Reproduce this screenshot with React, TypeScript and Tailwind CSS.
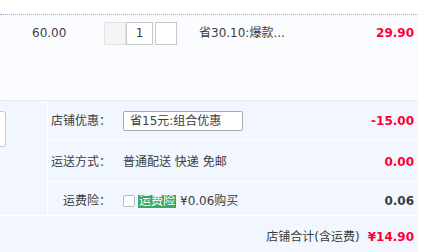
export default function App() {
  return (
    <div className="w-[430px] h-[252px] bg-white overflow-hidden font-['DejaVu_Sans','Noto_Sans_CJK_SC',sans-serif] text-[12px] text-[#3c3c3c]">
      <div className="h-[14px]" />
      <div className="w-[418px]">
        <div className="h-[87px] bg-[#fbfcff] border-t border-dotted border-t-[#80b2ff] border-b border-b-[#dddddd] flex items-start pt-[7px]">
          <div className="w-[104px] pl-[32px] leading-[23px]">60.00</div>
          <div className="flex items-center">
            <div className="w-[22px] h-[23px] bg-[#f5f5f5] border border-[#e3e3e3]" />
            <div className="w-[27px] h-[23px] bg-white border border-[#c8c8c8] text-center leading-[21px]">1</div>
            <div className="w-[22px] h-[23px] ml-[2px] bg-white border border-[#c8c8c8]" />
          </div>
          <div className="ml-[22px] leading-[22px]">省30.10:爆款...</div>
          <div className="ml-auto pr-[4px] leading-[22px] font-bold text-[#ff0036]">29.90</div>
        </div>
        <div className="flex bg-[#f2f7ff] border-b border-white">
          <div className="w-[48px] border-r border-white pt-[10px]">
            <div className="w-[6px] h-[36px] bg-white border border-l-0 border-[#cccccc] rounded-r-[3px]" />
          </div>
          <div className="flex-1 flex flex-col">
            <div className="h-[39px] border-b border-white flex items-center pt-[2px]">
              <div className="w-[63px] text-right">店铺优惠：</div>
              <div className="ml-[12px] w-[120px] h-[20px] bg-white border border-[#aaaaaa] rounded-[2px] pl-[6px] leading-[18px]">省15元:组合优惠</div>
              <div className="ml-auto pr-[4px] font-bold text-[#ff0036]">-15.00</div>
            </div>
            <div className="h-[42px] border-b border-white flex items-center pt-[2px]">
              <div className="w-[63px] text-right">运送方式：</div>
              <div className="ml-[12px]">普通配送 快递 免邮</div>
              <div className="ml-auto pr-[4px] font-bold text-[#ff0036]">0.00</div>
            </div>
            <div className="h-[33px] flex items-center pt-[5px]">
              <div className="w-[63px] text-right">运费险：</div>
              <div className="ml-[12px] flex items-center">
                <div className="w-[12px] h-[12px] bg-white border border-[#bbbbbb] rounded-[2px]" />
                <span className="ml-[3px] bg-[#38a866] text-white px-[1px] leading-[13px]">运费险</span>
                <span className="ml-[4px]">¥0.06购买</span>
              </div>
              <div className="ml-auto pr-[4px] font-bold text-[#3c3c3c]">0.06</div>
            </div>
          </div>
        </div>
        <div className="h-[36px] bg-[#f2f7ff] flex items-start justify-end pt-[13px] pr-[4px] leading-[16px]">
          <span>店铺合计(含运费)</span>
          <span className="ml-[8px] font-bold text-[#ff0036]">¥14.90</span>
        </div>
      </div>
    </div>
  );
}
